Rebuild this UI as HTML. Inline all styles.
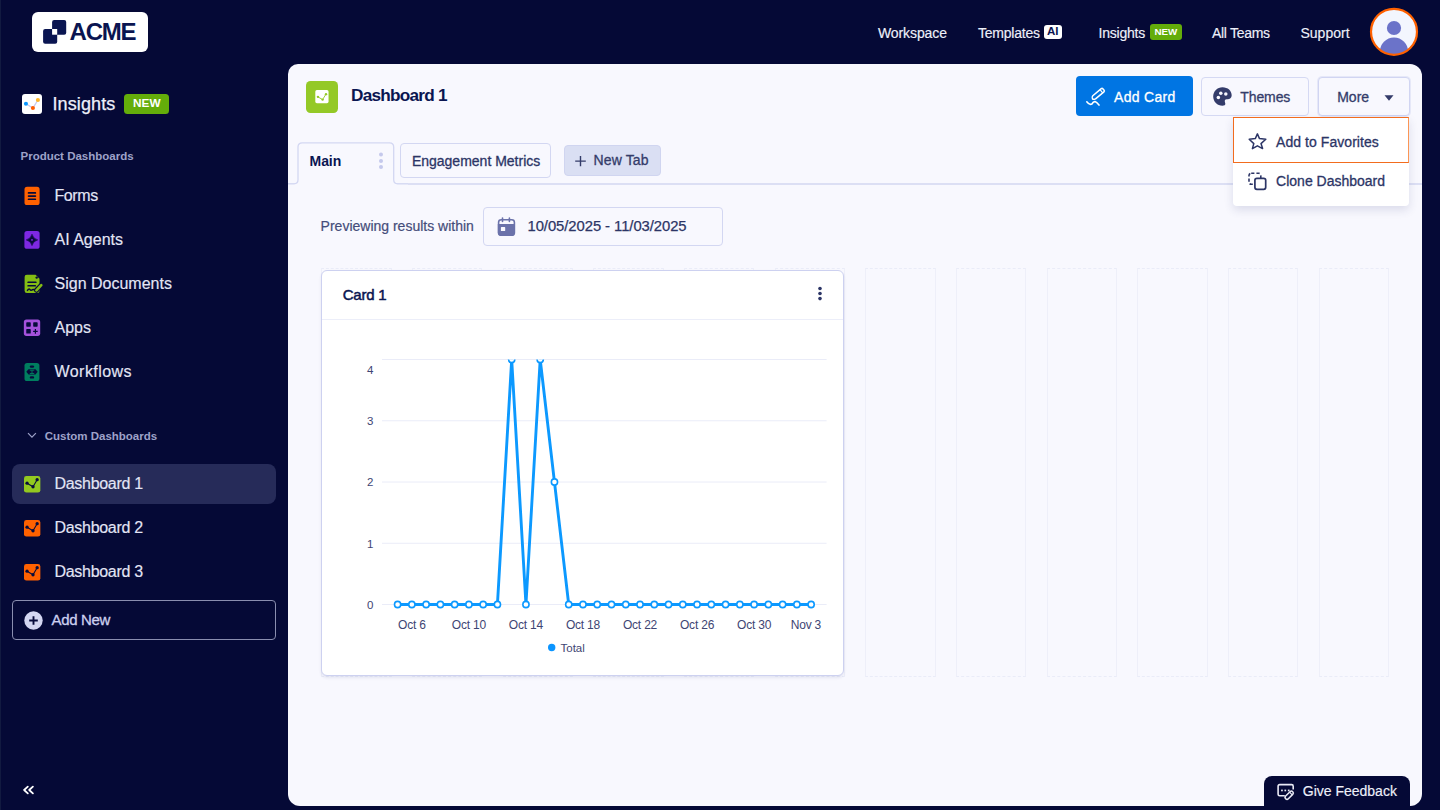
<!DOCTYPE html>
<html><head><meta charset="utf-8"><style>
html,body{margin:0;padding:0}
body{width:1440px;height:810px;overflow:hidden;background:#050936;position:relative;font-family:"Liberation Sans",sans-serif}
.t{position:absolute;line-height:1;white-space:nowrap}
</style></head><body>
<div style="position:absolute;left:0;top:0;width:1px;height:810px;background:#121a40"></div>
<div style="position:absolute;left:32px;top:12px;width:116px;height:40px;background:#fff;border-radius:6px"></div>
<svg style="position:absolute;left:0;top:0" width="160" height="60">
<rect x="52.1" y="19.9" width="14.1" height="14.8" rx="2" fill="#0a1551"/>
<rect x="43.1" y="29" width="14.1" height="14.7" rx="2" fill="#0a1551"/>
<rect x="52.1" y="29" width="5.1" height="5.7" fill="#fff"/>
</svg>
<div class="t" style="left:69.6px;top:19.88px;font-size:24px;color:#0a1551;font-weight:700;letter-spacing:-1.25px">ACME</div>
<div class="t" style="left:878px;top:25.85px;font-size:14px;color:#eef0fa;font-weight:400;letter-spacing:-0.1px;-webkit-text-stroke:0.15px #eef0fa">Workspace</div>
<div class="t" style="left:978px;top:25.85px;font-size:14px;color:#eef0fa;font-weight:400;letter-spacing:-0.22px;-webkit-text-stroke:0.15px #eef0fa">Templates</div>
<div class="t" style="left:1098.5px;top:25.85px;font-size:14px;color:#eef0fa;font-weight:400;letter-spacing:-0.22px;-webkit-text-stroke:0.15px #eef0fa">Insights</div>
<div class="t" style="left:1212px;top:25.85px;font-size:14px;color:#eef0fa;font-weight:400;letter-spacing:-0.3px;-webkit-text-stroke:0.15px #eef0fa">All Teams</div>
<div class="t" style="left:1300.5px;top:25.85px;font-size:14px;color:#eef0fa;font-weight:400;letter-spacing:0px;-webkit-text-stroke:0.15px #eef0fa">Support</div>
<div style="position:absolute;left:1044px;top:24.75px;width:18.25px;height:14.25px;background:#fff;border-radius:3px"></div>
<div class="t" style="left:1047.1px;top:25.87px;font-size:11.5px;color:#0a1551;font-weight:700;letter-spacing:-0.2px">AI</div>
<div style="position:absolute;left:1149.6px;top:24px;width:32.3px;height:15.75px;background:#64ad0a;border-radius:3px"></div>
<div class="t" style="left:1154.4px;top:27.30px;font-size:9.8px;color:#fff;font-weight:700;">NEW</div>
<svg style="position:absolute;left:1368px;top:6px" width="52" height="52" viewBox="0 0 52 52">
<defs><clipPath id="avc"><circle cx="26" cy="25.8" r="23"/></clipPath></defs>
<circle cx="26" cy="25.8" r="23" fill="#f3f6fe"/>
<g clip-path="url(#avc)" fill="#6b73c9">
<circle cx="26" cy="22" r="7.1"/>
<ellipse cx="26" cy="46" rx="14.2" ry="14.5"/>
</g>
<circle cx="26" cy="25.8" r="23" fill="none" stroke="#ff6100" stroke-width="2.2"/>
</svg>
<svg style="position:absolute;left:22px;top:94px" width="20" height="20" viewBox="0 0 20 20">
<rect width="20" height="20" rx="3" fill="#fff"/>
<polyline points="3.95,9.8 10.9,14 15.9,6" fill="none" stroke="#c5caf0" stroke-width="1.3"/>
<circle cx="3.95" cy="9.8" r="2.05" fill="#0a96ff"/>
<circle cx="10.9" cy="14" r="2.05" fill="#ff5c00"/>
<circle cx="15.9" cy="6" r="2.05" fill="#ffb629"/>
</svg>
<div class="t" style="left:52.5px;top:94.76px;font-size:18px;color:#eef0fa;font-weight:400;letter-spacing:0.1px;-webkit-text-stroke:0.25px #eef0fa">Insights</div>
<div style="position:absolute;left:124.4px;top:94px;width:44.6px;height:20px;background:#64ad0a;border-radius:3.5px"></div>
<div class="t" style="left:133px;top:98.01px;font-size:11.8px;color:#fff;font-weight:700;">NEW</div>
<div class="t" style="left:20.5px;top:150.77px;font-size:11.5px;color:#9ea2c9;font-weight:700;">Product Dashboards</div>
<div class="t" style="left:54.5px;top:187.96px;font-size:16px;color:#e3e5f5;font-weight:400;letter-spacing:-0.4px;-webkit-text-stroke:0.15px #e3e5f5">Forms</div>
<div class="t" style="left:54.5px;top:231.96px;font-size:16px;color:#e3e5f5;font-weight:400;letter-spacing:0px;-webkit-text-stroke:0.15px #e3e5f5">AI Agents</div>
<div class="t" style="left:54.5px;top:275.96px;font-size:16px;color:#e3e5f5;font-weight:400;letter-spacing:0px;-webkit-text-stroke:0.15px #e3e5f5">Sign Documents</div>
<div class="t" style="left:54.5px;top:319.96px;font-size:16px;color:#e3e5f5;font-weight:400;letter-spacing:0px;-webkit-text-stroke:0.15px #e3e5f5">Apps</div>
<div class="t" style="left:54.5px;top:363.96px;font-size:16px;color:#e3e5f5;font-weight:400;letter-spacing:0.45px;-webkit-text-stroke:0.15px #e3e5f5">Workflows</div>
<svg style="position:absolute;left:20px;top:182px" width="26" height="26" viewBox="0 0 26 26">
<rect x="4.5" y="4.8" width="15.1" height="18.2" rx="2.6" fill="#ff6100"/>
<rect x="7.7" y="10.1" width="8.5" height="1.7" rx="0.85" fill="#070b3b"/>
<rect x="7.7" y="13.2" width="8.5" height="1.7" rx="0.85" fill="#070b3b"/>
<rect x="7.7" y="16.4" width="8.5" height="1.7" rx="0.85" fill="#070b3b"/>
</svg>
<svg style="position:absolute;left:20px;top:226px" width="26" height="26" viewBox="0 0 26 26">
<rect x="4.4" y="4.9" width="15.2" height="17.9" rx="2.6" fill="#7d28e3"/>
<path d="M12 8.2 Q13.1 12.8 17.7 13.9 Q13.1 15 12 19.6 Q10.9 15 6.3 13.9 Q10.9 12.8 12 8.2Z" fill="#070b3b" stroke="#070b3b" stroke-width="0.6" stroke-linejoin="round"/>
<rect x="11.2" y="13.1" width="1.6" height="1.6" fill="#7d28e3"/>
</svg>
<svg style="position:absolute;left:20px;top:270px" width="26" height="26" viewBox="0 0 26 26">
<path d="M6.8 4.8 H15.6 L19.5 8.7 V20.8 Q19.5 23 17.3 23 H6.8 Q4.6 23 4.6 20.8 V7 Q4.6 4.8 6.8 4.8Z" fill="#84bd14"/>
<circle cx="16.7" cy="7.6" r="1.2" fill="#070b3b"/>
<rect x="7.3" y="11.4" width="9.4" height="1.7" rx="0.85" fill="#070b3b"/>
<rect x="7.3" y="14.9" width="8.8" height="1.7" rx="0.85" fill="#070b3b"/>
<path d="M7.4 20.5 Q8.8 18.2 9.9 19.4 Q10.6 20.7 11.6 20.2 Q12.8 19.1 14 19.6 Q15 20.1 16.2 19.7" fill="none" stroke="#070b3b" stroke-width="1.4" stroke-linecap="round"/>
<line x1="16.4" y1="20.3" x2="21.3" y2="15.1" stroke="#070b3b" stroke-width="5" stroke-linecap="round"/>
<line x1="16.4" y1="20.3" x2="21.3" y2="15.1" stroke="#84bd14" stroke-width="2.6" stroke-linecap="round"/>
</svg>
<svg style="position:absolute;left:20px;top:315px" width="26" height="26" viewBox="0 0 26 26">
<rect x="3.85" y="4.5" width="16.35" height="16.4" rx="2.6" fill="#a552dc"/>
<rect x="6.26" y="7.2" width="4.5" height="4.5" rx="0.7" fill="#070b3b"/>
<rect x="13.2" y="7.2" width="4.45" height="4.5" rx="0.7" fill="#070b3b"/>
<rect x="6.26" y="14.1" width="4.5" height="4.5" rx="0.7" fill="#070b3b"/>
<path d="M15.4 14.1 V18.7 M13.1 16.4 H17.7" stroke="#070b3b" stroke-width="1.2"/>
</svg>
<svg style="position:absolute;left:20px;top:359px" width="26" height="26" viewBox="0 0 26 26">
<rect x="4.5" y="4" width="14.9" height="18" rx="2.6" fill="#007e5f"/>
<rect x="9.8" y="6.4" width="4.3" height="2.4" rx="1.2" fill="#070b3b"/>
<path d="M6.3 12.85 L8.5 10.3 H15.5 L17.7 12.85 L15.5 15.4 H8.5Z" fill="#070b3b"/>
<path d="M9.8 11.2 H14.2 M9.8 14.5 H14.2 M12 11.2 V14.5" stroke="#007e5f" stroke-width="0.9"/>
<rect x="9.8" y="17.2" width="4.3" height="2.4" rx="1.2" fill="#070b3b"/>
</svg>
<svg style="position:absolute;left:27px;top:432px" width="10" height="7" viewBox="0 0 10 7"><polyline points="1,1.2 4.95,5.2 8.9,1.2" fill="none" stroke="#9ea2c9" stroke-width="1.2"/></svg>
<div class="t" style="left:44.7px;top:430.77px;font-size:11.5px;color:#9ea2c9;font-weight:700;">Custom Dashboards</div>
<div style="position:absolute;left:12px;top:464px;width:264px;height:40px;background:#262b59;border-radius:8px"></div>
<svg style="position:absolute;left:23.85px;top:475.65px" width="17" height="17" viewBox="0 0 17 17">
<rect width="16.35" height="16.55" rx="2.4" fill="#93c920"/>
<polyline points="3.05,7.2 9,10.75 13.15,3.65" fill="none" stroke="#070b3b" stroke-width="1.05"/>
<circle cx="3.05" cy="7.2" r="1.65" fill="#070b3b"/><circle cx="9" cy="10.75" r="1.65" fill="#070b3b"/><circle cx="13.15" cy="3.65" r="1.65" fill="#070b3b"/>
</svg>
<div class="t" style="left:54.5px;top:476.26px;font-size:16px;color:#e3e5f5;font-weight:400;letter-spacing:-0.3px;-webkit-text-stroke:0.15px #e3e5f5">Dashboard 1</div>
<svg style="position:absolute;left:23.85px;top:519.65px" width="17" height="17" viewBox="0 0 17 17">
<rect width="16.35" height="16.55" rx="2.4" fill="#ff6100"/>
<polyline points="3.05,7.2 9,10.75 13.15,3.65" fill="none" stroke="#070b3b" stroke-width="1.05"/>
<circle cx="3.05" cy="7.2" r="1.65" fill="#070b3b"/><circle cx="9" cy="10.75" r="1.65" fill="#070b3b"/><circle cx="13.15" cy="3.65" r="1.65" fill="#070b3b"/>
</svg>
<div class="t" style="left:54.5px;top:520.26px;font-size:16px;color:#e3e5f5;font-weight:400;letter-spacing:-0.3px;-webkit-text-stroke:0.15px #e3e5f5">Dashboard 2</div>
<svg style="position:absolute;left:23.85px;top:563.65px" width="17" height="17" viewBox="0 0 17 17">
<rect width="16.35" height="16.55" rx="2.4" fill="#ff6100"/>
<polyline points="3.05,7.2 9,10.75 13.15,3.65" fill="none" stroke="#070b3b" stroke-width="1.05"/>
<circle cx="3.05" cy="7.2" r="1.65" fill="#070b3b"/><circle cx="9" cy="10.75" r="1.65" fill="#070b3b"/><circle cx="13.15" cy="3.65" r="1.65" fill="#070b3b"/>
</svg>
<div class="t" style="left:54.5px;top:564.26px;font-size:16px;color:#e3e5f5;font-weight:400;letter-spacing:-0.3px;-webkit-text-stroke:0.15px #e3e5f5">Dashboard 3</div>
<div style="position:absolute;left:12px;top:600px;width:262px;height:38px;border:1px solid #8a8eaf;border-radius:4px"></div>
<svg style="position:absolute;left:23.5px;top:610.5px" width="19" height="19" viewBox="0 0 19 19">
<circle cx="9.5" cy="9.5" r="9.2" fill="#d3d6f1"/>
<path d="M9.5 5.2 V13.8 M5.2 9.5 H13.8" stroke="#070b3b" stroke-width="1.9"/>
</svg>
<div class="t" style="left:51.5px;top:612.30px;font-size:15px;color:#cdd0ef;font-weight:400;-webkit-text-stroke:0.3px #cdd0ef;letter-spacing:-0.35px">Add New</div>
<svg style="position:absolute;left:22px;top:785px" width="13" height="10" viewBox="0 0 13 10"><polyline points="5.8,1.6 2.1,5 5.8,8.4" fill="none" stroke="#fff" stroke-width="1.8" stroke-linecap="round" stroke-linejoin="round"/><polyline points="10.9,1.6 7.2,5 10.9,8.4" fill="none" stroke="#fff" stroke-width="1.8" stroke-linecap="round" stroke-linejoin="round"/></svg>
<div style="position:absolute;left:288px;top:64px;width:1134px;height:742px;background:#f8f8fe;border-radius:10px 12px 12px 12px"></div>
<svg style="position:absolute;left:306px;top:80.5px" width="32" height="32" viewBox="0 0 32 32">
<rect width="32" height="32" rx="4.5" fill="#94c927"/>
<rect x="9.3" y="9.1" width="13.25" height="13.1" rx="1.6" fill="#fff"/>
<polyline points="11.95,15.86 16.6,18.6 20,13.13" fill="none" stroke="#94c927" stroke-width="0.9"/>
<circle cx="11.95" cy="15.86" r="1.2" fill="#94c927"/><circle cx="16.6" cy="18.6" r="1.2" fill="#94c927"/><circle cx="20" cy="13.13" r="1.2" fill="#94c927"/>
</svg>
<div class="t" style="left:351px;top:87.34px;font-size:17.2px;color:#0a1551;font-weight:700;letter-spacing:-0.75px">Dashboard 1</div>
<div style="position:absolute;left:1075.6px;top:76.25px;width:117.3px;height:40px;background:#0075e3;border-radius:4px"></div>
<svg style="position:absolute;left:1080px;top:82px" width="30" height="28" viewBox="0 0 30 28">
<g transform="translate(18 12.1) rotate(-40)">
<path d="M-5 -2.1 H6 Q7.1 -2.1 7.1 -1 V1 Q7.1 2.1 6 2.1 H-5 Q-7.3 1.4 -7.3 0 Q-7.3 -1.4 -5 -2.1Z" fill="none" stroke="#fff" stroke-width="1.5" stroke-linejoin="round"/>
<line x1="4.4" y1="-2.1" x2="4.4" y2="2.1" stroke="#fff" stroke-width="1.2"/>
</g>
<path d="M6.8 19.8 Q9.4 23.3 11.9 22 Q13.3 19.4 15 19.6 Q16.6 20.2 19 23.1" fill="none" stroke="#fff" stroke-width="1.6" stroke-linecap="round"/>
</svg>
<div class="t" style="left:1114px;top:89.85px;font-size:14px;color:#fff;font-weight:400;-webkit-text-stroke:0.3px #fff;letter-spacing:0.3px">Add Card</div>
<div style="position:absolute;left:1201.25px;top:76.6px;width:105.75px;height:37.5px;border:1px solid #d5d9f3;border-radius:4px;background:#f8f8fe"></div>
<svg style="position:absolute;left:1212.5px;top:86.8px" width="19" height="19" viewBox="0 0 19 19">
<path d="M9.5 0.2 C14.8 0.2 18.7 3.8 18.7 8.2 C18.7 11.2 16.4 12.4 14.2 12.2 C12.6 12 11.6 12.6 11.8 14.4 C12 16 12.6 16.6 12.2 17.6 C11.8 18.5 10.8 18.7 9.5 18.7 C4.3 18.7 0.2 14.6 0.2 9.5 C0.2 4.3 4.3 0.2 9.5 0.2Z" fill="#343c6a"/>
<circle cx="7.8" cy="6.3" r="1.75" fill="#f8f8fe"/>
<circle cx="12.8" cy="7.1" r="1.75" fill="#f8f8fe"/>
<circle cx="5.35" cy="10.6" r="1.75" fill="#f8f8fe"/>
</svg>
<div class="t" style="left:1240.3px;top:89.85px;font-size:14px;color:#343c6a;font-weight:400;-webkit-text-stroke:0.3px #343c6a;letter-spacing:-0.1px">Themes</div>
<div style="position:absolute;left:1317.7px;top:76.6px;width:90px;height:37.5px;border:1px solid #d1d5f2;border-radius:4px;background:#f8f8fe;box-shadow:0 0 0 1px #e6e8f8"></div>
<div class="t" style="left:1337.2px;top:89.85px;font-size:14px;color:#343c6a;font-weight:400;-webkit-text-stroke:0.3px #343c6a;letter-spacing:0px">More</div>
<svg style="position:absolute;left:1384px;top:95px" width="10" height="6" viewBox="0 0 10 6"><path d="M0.5 0.3 H9.5 L5 5.8Z" fill="#343c6a"/></svg>
<div style="position:absolute;left:288px;top:183px;width:1134px;height:1.6px;background:#dcdff4"></div>
<svg style="position:absolute;left:288px;top:140px" width="120" height="48" viewBox="0 0 120 48">
<path d="M0 43.8 H6 Q10 43.8 10 39.8 V7 Q10 2.8 14.2 2.8 H101.5 Q105.7 2.8 105.7 7 V39.8 Q105.7 43.8 109.7 43.8 H120 V48 H0Z" fill="#f8f8fe"/>
<path d="M0 43.8 H6 Q10 43.8 10 39.8 V7 Q10 2.8 14.2 2.8 H101.5 Q105.7 2.8 105.7 7 V39.8 Q105.7 43.8 109.7 43.8 H120" fill="none" stroke="#d3d7f2" stroke-width="1.3"/>
</svg>
<div class="t" style="left:309.6px;top:153.75px;font-size:14px;color:#0a1551;font-weight:700;letter-spacing:-0.1px">Main</div>
<svg style="position:absolute;left:377px;top:151px" width="8" height="20" viewBox="0 0 8 20">
<circle cx="4" cy="3.6" r="2" fill="#c5c9ec"/><circle cx="4" cy="9.9" r="2" fill="#c5c9ec"/><circle cx="4" cy="16.1" r="2" fill="#c5c9ec"/>
</svg>
<div style="position:absolute;left:399.5px;top:142.75px;width:149.5px;height:33.5px;border:1px solid #d3d7f2;border-radius:4px;background:#f8f8fe"></div>
<div class="t" style="left:411.9px;top:153.75px;font-size:14px;color:#2c3566;font-weight:400;-webkit-text-stroke:0.3px #2c3566;letter-spacing:0px">Engagement Metrics</div>
<div style="position:absolute;left:563.6px;top:144.7px;width:95px;height:29.5px;border:1px solid #d0d5f0;border-radius:4px;background:#dadff3"></div>
<svg style="position:absolute;left:574px;top:154.5px" width="13" height="12" viewBox="0 0 13 12"><path d="M6.5 1 V11.2 M1.2 6.1 H11.8" stroke="#343c6a" stroke-width="1.4"/></svg>
<div class="t" style="left:593.6px;top:153.45px;font-size:14px;color:#343c6a;font-weight:400;-webkit-text-stroke:0.3px #343c6a;letter-spacing:0.12px">New Tab</div>
<div class="t" style="left:320.6px;top:219.40px;font-size:14px;color:#454d7a;font-weight:400;letter-spacing:0px;-webkit-text-stroke:0.2px #454d7a">Previewing results within</div>
<div style="position:absolute;left:483px;top:206.7px;width:238px;height:37.5px;border:1px solid #d3d7f2;border-radius:4px;background:#f8f8fe"></div>
<svg style="position:absolute;left:493px;top:213px" width="26" height="26" viewBox="0 0 26 26">
<rect x="5.6" y="6.7" width="15.8" height="15.6" rx="2.6" fill="none" stroke="#6b72aa" stroke-width="1.6"/>
<path d="M4.8 11.1 H21.2 V19.6 Q21.2 22.2 18.6 22.2 H7.4 Q4.8 22.2 4.8 19.6Z" fill="#6b72aa"/>
<rect x="8.7" y="4.2" width="1.6" height="5" rx="0.8" fill="#6b72aa"/>
<rect x="15.6" y="4.2" width="1.6" height="5" rx="0.8" fill="#6b72aa"/>
<rect x="7.9" y="14.1" width="4.3" height="3.9" rx="0.6" fill="#f8f8fe"/>
</svg>
<div class="t" style="left:527.5px;top:219.07px;font-size:14.8px;color:#2c3566;font-weight:400;letter-spacing:-0.05px;-webkit-text-stroke:0.25px #2c3566">10/05/2025 - 11/03/2025</div>
<div style="position:absolute;left:321.30px;top:268.3px;width:70.3px;height:408.5px;border:1px solid #eeeff9;border-top:1px dashed #eaecf8;border-bottom:1px dashed #eaecf8;box-sizing:border-box"></div>
<div style="position:absolute;left:411.97px;top:268.3px;width:70.3px;height:408.5px;border:1px solid #eeeff9;border-top:1px dashed #eaecf8;border-bottom:1px dashed #eaecf8;box-sizing:border-box"></div>
<div style="position:absolute;left:502.64px;top:268.3px;width:70.3px;height:408.5px;border:1px solid #eeeff9;border-top:1px dashed #eaecf8;border-bottom:1px dashed #eaecf8;box-sizing:border-box"></div>
<div style="position:absolute;left:593.31px;top:268.3px;width:70.3px;height:408.5px;border:1px solid #eeeff9;border-top:1px dashed #eaecf8;border-bottom:1px dashed #eaecf8;box-sizing:border-box"></div>
<div style="position:absolute;left:683.98px;top:268.3px;width:70.3px;height:408.5px;border:1px solid #eeeff9;border-top:1px dashed #eaecf8;border-bottom:1px dashed #eaecf8;box-sizing:border-box"></div>
<div style="position:absolute;left:774.65px;top:268.3px;width:70.3px;height:408.5px;border:1px solid #eeeff9;border-top:1px dashed #eaecf8;border-bottom:1px dashed #eaecf8;box-sizing:border-box"></div>
<div style="position:absolute;left:865.32px;top:268.3px;width:70.3px;height:408.5px;border:1px solid #eeeff9;border-top:1px dashed #eaecf8;border-bottom:1px dashed #eaecf8;box-sizing:border-box"></div>
<div style="position:absolute;left:955.99px;top:268.3px;width:70.3px;height:408.5px;border:1px solid #eeeff9;border-top:1px dashed #eaecf8;border-bottom:1px dashed #eaecf8;box-sizing:border-box"></div>
<div style="position:absolute;left:1046.66px;top:268.3px;width:70.3px;height:408.5px;border:1px solid #eeeff9;border-top:1px dashed #eaecf8;border-bottom:1px dashed #eaecf8;box-sizing:border-box"></div>
<div style="position:absolute;left:1137.33px;top:268.3px;width:70.3px;height:408.5px;border:1px solid #eeeff9;border-top:1px dashed #eaecf8;border-bottom:1px dashed #eaecf8;box-sizing:border-box"></div>
<div style="position:absolute;left:1228.00px;top:268.3px;width:70.3px;height:408.5px;border:1px solid #eeeff9;border-top:1px dashed #eaecf8;border-bottom:1px dashed #eaecf8;box-sizing:border-box"></div>
<div style="position:absolute;left:1318.67px;top:268.3px;width:70.3px;height:408.5px;border:1px solid #eeeff9;border-top:1px dashed #eaecf8;border-bottom:1px dashed #eaecf8;box-sizing:border-box"></div>
<div style="position:absolute;left:321px;top:269.5px;width:522.5px;height:406px;background:#fff;border:1px solid #cdd1f0;border-radius:6px;box-sizing:border-box;box-shadow:0 2px 3px rgba(60,70,140,0.10)"></div>
<div style="position:absolute;left:322px;top:318.5px;width:520.5px;height:1.4px;background:#eceef9"></div>
<div class="t" style="left:342.7px;top:287.30px;font-size:15px;color:#0a1551;font-weight:400;-webkit-text-stroke:0.5px #0a1551;letter-spacing:-0.2px">Card 1</div>
<svg style="position:absolute;left:816px;top:284px" width="8" height="18" viewBox="0 0 8 18">
<circle cx="4" cy="4.5" r="1.8" fill="#2c3566"/><circle cx="4" cy="9.5" r="1.8" fill="#2c3566"/><circle cx="4" cy="14.6" r="1.8" fill="#2c3566"/>
</svg>
<svg style="position:absolute;left:0;top:0" width="1440" height="810">
<defs><clipPath id="pc"><rect x="380" y="359.5" width="460" height="260"/></clipPath></defs>
<line x1="382" y1="604.5" x2="826.6" y2="604.5" stroke="#eaecf8" stroke-width="1"/>
<line x1="382" y1="543.25" x2="826.6" y2="543.25" stroke="#eaecf8" stroke-width="1"/>
<line x1="382" y1="482.0" x2="826.6" y2="482.0" stroke="#eaecf8" stroke-width="1"/>
<line x1="382" y1="420.75" x2="826.6" y2="420.75" stroke="#eaecf8" stroke-width="1"/>
<line x1="382" y1="359.5" x2="826.6" y2="359.5" stroke="#eaecf8" stroke-width="1"/>
<text x="370.2" y="608.7" font-size="11.5" fill="#3e4573" text-anchor="middle" font-family="Liberation Sans">0</text>
<text x="370.2" y="547.5" font-size="11.5" fill="#3e4573" text-anchor="middle" font-family="Liberation Sans">1</text>
<text x="370.2" y="486.2" font-size="11.5" fill="#3e4573" text-anchor="middle" font-family="Liberation Sans">2</text>
<text x="370.2" y="425.2" font-size="11.5" fill="#3e4573" text-anchor="middle" font-family="Liberation Sans">3</text>
<text x="370.2" y="373.5" font-size="11.5" fill="#3e4573" text-anchor="middle" font-family="Liberation Sans">4</text>
<g clip-path="url(#pc)"><polyline points="397.60,604.50 411.86,604.50 426.12,604.50 440.38,604.50 454.64,604.50 468.90,604.50 483.16,604.50 497.42,604.50 511.68,359.50 525.94,604.50 540.20,359.50 554.46,482.00 568.72,604.50 582.98,604.50 597.24,604.50 611.50,604.50 625.76,604.50 640.02,604.50 654.28,604.50 668.54,604.50 682.80,604.50 697.06,604.50 711.32,604.50 725.58,604.50 739.84,604.50 754.10,604.50 768.36,604.50 782.62,604.50 796.88,604.50 811.14,604.50" fill="none" stroke="#0c99ff" stroke-width="2.9" stroke-linejoin="miter"/>
<circle cx="397.60" cy="604.50" r="3.1" fill="#fff" stroke="#0c99ff" stroke-width="1.6"/>
<circle cx="411.86" cy="604.50" r="3.1" fill="#fff" stroke="#0c99ff" stroke-width="1.6"/>
<circle cx="426.12" cy="604.50" r="3.1" fill="#fff" stroke="#0c99ff" stroke-width="1.6"/>
<circle cx="440.38" cy="604.50" r="3.1" fill="#fff" stroke="#0c99ff" stroke-width="1.6"/>
<circle cx="454.64" cy="604.50" r="3.1" fill="#fff" stroke="#0c99ff" stroke-width="1.6"/>
<circle cx="468.90" cy="604.50" r="3.1" fill="#fff" stroke="#0c99ff" stroke-width="1.6"/>
<circle cx="483.16" cy="604.50" r="3.1" fill="#fff" stroke="#0c99ff" stroke-width="1.6"/>
<circle cx="497.42" cy="604.50" r="3.1" fill="#fff" stroke="#0c99ff" stroke-width="1.6"/>
<circle cx="511.68" cy="359.50" r="3.1" fill="#fff" stroke="#0c99ff" stroke-width="1.6"/>
<circle cx="525.94" cy="604.50" r="3.1" fill="#fff" stroke="#0c99ff" stroke-width="1.6"/>
<circle cx="540.20" cy="359.50" r="3.1" fill="#fff" stroke="#0c99ff" stroke-width="1.6"/>
<circle cx="554.46" cy="482.00" r="3.1" fill="#fff" stroke="#0c99ff" stroke-width="1.6"/>
<circle cx="568.72" cy="604.50" r="3.1" fill="#fff" stroke="#0c99ff" stroke-width="1.6"/>
<circle cx="582.98" cy="604.50" r="3.1" fill="#fff" stroke="#0c99ff" stroke-width="1.6"/>
<circle cx="597.24" cy="604.50" r="3.1" fill="#fff" stroke="#0c99ff" stroke-width="1.6"/>
<circle cx="611.50" cy="604.50" r="3.1" fill="#fff" stroke="#0c99ff" stroke-width="1.6"/>
<circle cx="625.76" cy="604.50" r="3.1" fill="#fff" stroke="#0c99ff" stroke-width="1.6"/>
<circle cx="640.02" cy="604.50" r="3.1" fill="#fff" stroke="#0c99ff" stroke-width="1.6"/>
<circle cx="654.28" cy="604.50" r="3.1" fill="#fff" stroke="#0c99ff" stroke-width="1.6"/>
<circle cx="668.54" cy="604.50" r="3.1" fill="#fff" stroke="#0c99ff" stroke-width="1.6"/>
<circle cx="682.80" cy="604.50" r="3.1" fill="#fff" stroke="#0c99ff" stroke-width="1.6"/>
<circle cx="697.06" cy="604.50" r="3.1" fill="#fff" stroke="#0c99ff" stroke-width="1.6"/>
<circle cx="711.32" cy="604.50" r="3.1" fill="#fff" stroke="#0c99ff" stroke-width="1.6"/>
<circle cx="725.58" cy="604.50" r="3.1" fill="#fff" stroke="#0c99ff" stroke-width="1.6"/>
<circle cx="739.84" cy="604.50" r="3.1" fill="#fff" stroke="#0c99ff" stroke-width="1.6"/>
<circle cx="754.10" cy="604.50" r="3.1" fill="#fff" stroke="#0c99ff" stroke-width="1.6"/>
<circle cx="768.36" cy="604.50" r="3.1" fill="#fff" stroke="#0c99ff" stroke-width="1.6"/>
<circle cx="782.62" cy="604.50" r="3.1" fill="#fff" stroke="#0c99ff" stroke-width="1.6"/>
<circle cx="796.88" cy="604.50" r="3.1" fill="#fff" stroke="#0c99ff" stroke-width="1.6"/>
<circle cx="811.14" cy="604.50" r="3.1" fill="#fff" stroke="#0c99ff" stroke-width="1.6"/>
</g>
<text x="411.86" y="628.8" font-size="12" fill="#3e4573" text-anchor="middle" font-family="Liberation Sans" letter-spacing="-0.2">Oct 6</text>
<text x="468.90" y="628.8" font-size="12" fill="#3e4573" text-anchor="middle" font-family="Liberation Sans" letter-spacing="-0.2">Oct 10</text>
<text x="525.94" y="628.8" font-size="12" fill="#3e4573" text-anchor="middle" font-family="Liberation Sans" letter-spacing="-0.2">Oct 14</text>
<text x="582.98" y="628.8" font-size="12" fill="#3e4573" text-anchor="middle" font-family="Liberation Sans" letter-spacing="-0.2">Oct 18</text>
<text x="640.02" y="628.8" font-size="12" fill="#3e4573" text-anchor="middle" font-family="Liberation Sans" letter-spacing="-0.2">Oct 22</text>
<text x="697.06" y="628.8" font-size="12" fill="#3e4573" text-anchor="middle" font-family="Liberation Sans" letter-spacing="-0.2">Oct 26</text>
<text x="754.10" y="628.8" font-size="12" fill="#3e4573" text-anchor="middle" font-family="Liberation Sans" letter-spacing="-0.2">Oct 30</text>
<text x="805.9" y="628.8" font-size="12" fill="#3e4573" text-anchor="middle" font-family="Liberation Sans" letter-spacing="-0.2">Nov 3</text>
<circle cx="551.7" cy="647.5" r="3.7" fill="#0b95ff"/>
<text x="560.5" y="651.5" font-size="11.5" fill="#3e4573" font-family="Liberation Sans">Total</text>
</svg>
<div style="position:absolute;left:1233.3px;top:117.2px;width:176px;height:88.4px;background:#fff;border-radius:0 0 4px 4px;box-shadow:0 4px 10px rgba(40,50,110,0.14)"></div>
<div style="position:absolute;left:1233.3px;top:117.2px;width:176px;height:46px;border:1.7px solid #f26c1e;border-right-color:#fb9656;box-sizing:border-box"></div>
<svg style="position:absolute;left:1244px;top:128px" width="28" height="68" viewBox="0 0 28 68">
<path d="M13.4 5.9 L15.5 10.6 L21.8 11.3 L17 15.6 L18.6 20.6 L13.4 17.8 L8.4 20.6 L9.8 15.6 L5.2 11.3 L11.3 10.6Z" fill="none" stroke="#2c3566" stroke-width="1.5" stroke-linejoin="round"/>
<rect x="5" y="45.3" width="11.8" height="11" rx="2.2" fill="none" stroke="#2c3566" stroke-width="1.6" stroke-dasharray="3.2 2"/>
<rect x="10.9" y="50.3" width="10.8" height="11" rx="2" fill="#fff" stroke="#2c3566" stroke-width="1.7"/>
</svg>
<div class="t" style="left:1276.1px;top:134.95px;font-size:14px;color:#2c3566;font-weight:400;-webkit-text-stroke:0.3px #2c3566;letter-spacing:0.05px">Add to Favorites</div>
<div class="t" style="left:1276.1px;top:174.25px;font-size:14px;color:#2c3566;font-weight:400;-webkit-text-stroke:0.3px #2c3566;letter-spacing:0px">Clone Dashboard</div>
<div style="position:absolute;left:1264px;top:776px;width:146px;height:34px;background:#050936;border-radius:8px 8px 0 0"></div>
<svg style="position:absolute;left:1276px;top:782.5px" width="20" height="20" viewBox="0 0 20 20">
<path d="M8.8 12.8 H3.7 Q2.1 12.8 2.1 11.2 V3.2 Q2.1 1.6 3.7 1.6 H15.6 Q17.2 1.6 17.2 3.2 V6.6" fill="none" stroke="#e9eaf5" stroke-width="1.6"/>
<rect x="5.1" y="6.6" width="1.7" height="1.7" fill="#e9eaf5"/><rect x="8.45" y="6.6" width="1.7" height="1.7" fill="#e9eaf5"/><rect x="11.85" y="6.6" width="1.7" height="1.7" fill="#e9eaf5"/>
<g transform="translate(13.2 12.2) rotate(-45)">
<rect x="-5" y="-1.9" width="10" height="3.8" rx="1.9" fill="#050936" stroke="#e9eaf5" stroke-width="1.5"/>
<line x1="2.4" y1="-1.9" x2="2.4" y2="1.9" stroke="#e9eaf5" stroke-width="1.2"/>
</g>
</svg>
<div class="t" style="left:1302.75px;top:783.75px;font-size:14px;color:#eef0fa;font-weight:400;letter-spacing:0px;-webkit-text-stroke:0.15px #eef0fa">Give Feedback</div>
</body></html>
